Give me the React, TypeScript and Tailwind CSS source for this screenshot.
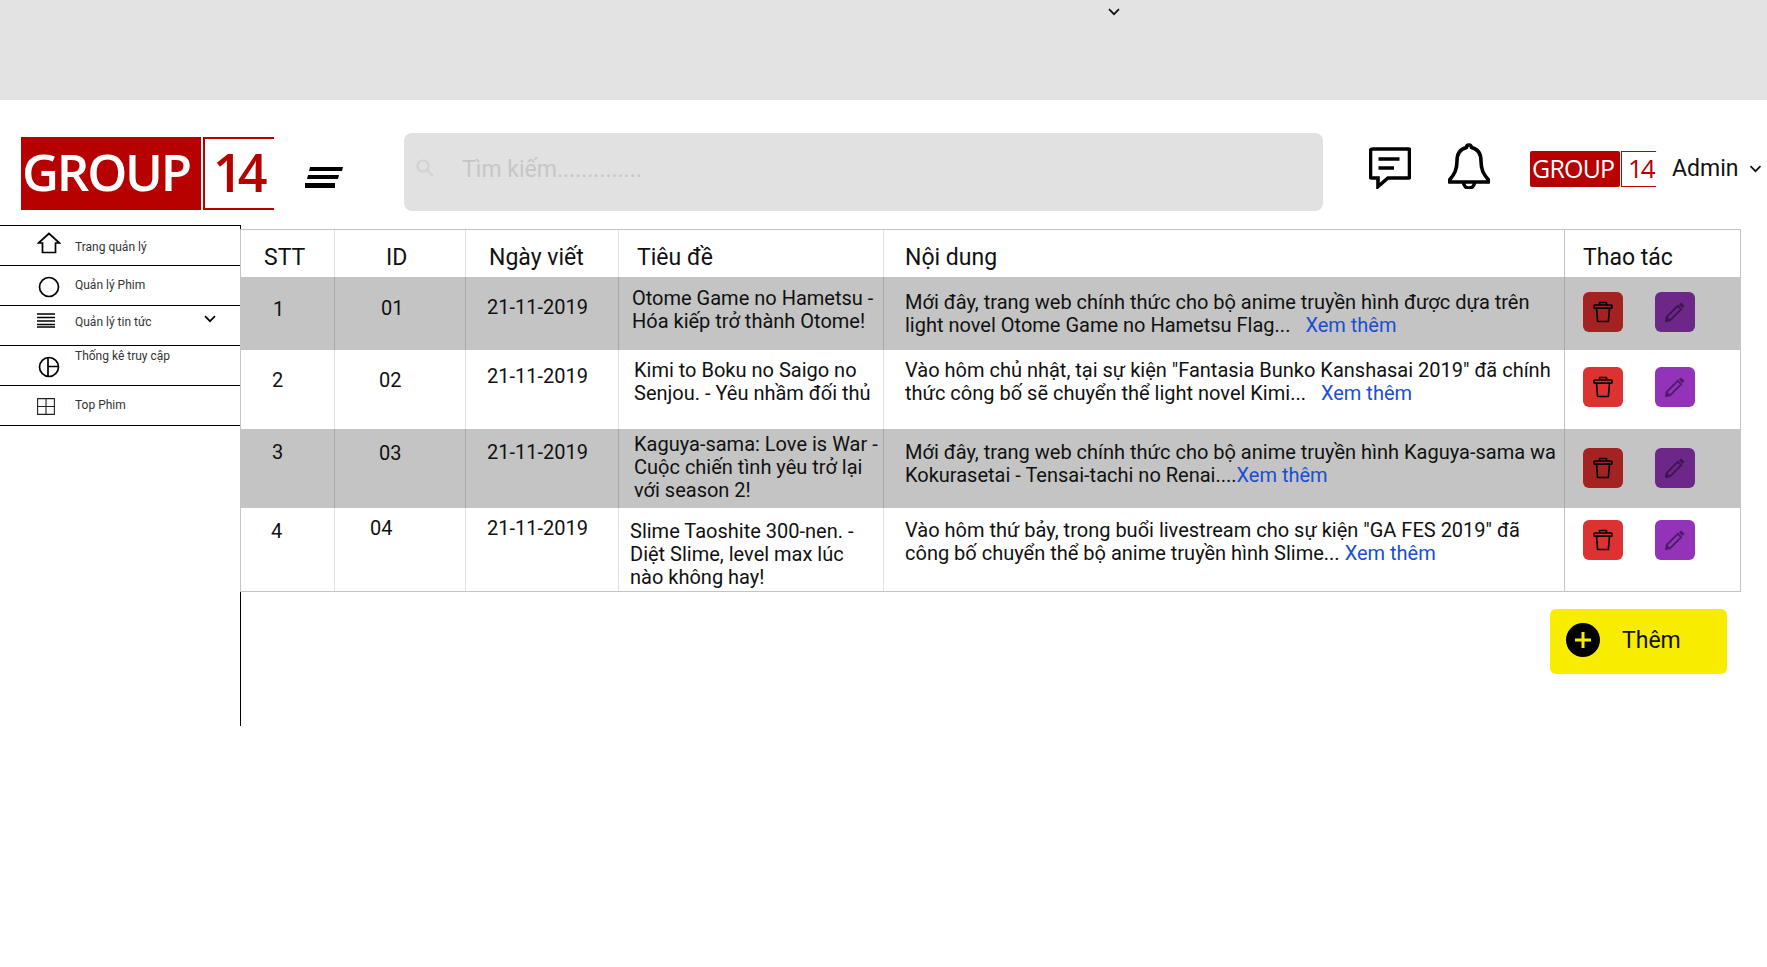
import React from 'react';

const LINK = 'text-[#1a4fd0]';

const rows = [
  {
    dark: true,
    h: 'h-[73px]',
    stt: 'pt-[21px] pl-[32px]', id: 'pt-[20px] pl-[46px]', date: 'pt-[19px] pl-[21px]', title: 'pt-[10px] pl-[13px]', body: 'pt-[14px] pl-[21px]', btn: 'pt-[15px]',
    no: '1', code: '01',
    titleLines: ['Otome Game no Hametsu -', 'Hóa kiếp trở thành Otome!'],
    bodyLines: ['Mới đây, trang web chính thức cho bộ anime truyền hình được dựa trên', 'light novel Otome Game no Hametsu Flag...'],
    gap: 'ml-[15px]',
  },
  {
    dark: false,
    h: 'h-[79px]',
    stt: 'pt-[19px] pl-[31px]', id: 'pt-[19px] pl-[44px]', date: 'pt-[15px] pl-[21px]', title: 'pt-[9px] pl-[15px]', body: 'pt-[9px] pl-[21px]', btn: 'pt-[17px]',
    no: '2', code: '02',
    titleLines: ['Kimi to Boku no Saigo no', 'Senjou. - Yêu nhầm đối thủ'],
    bodyLines: ['Vào hôm chủ nhật, tại sự kiện "Fantasia Bunko Kanshasai 2019" đã chính', 'thức công bố sẽ chuyển thể light novel Kimi...'],
    gap: 'ml-[15px]',
  },
  {
    dark: true,
    h: 'h-[79px]',
    stt: 'pt-[12px] pl-[31px]', id: 'pt-[13px] pl-[44px]', date: 'pt-[12px] pl-[21px]', title: 'pt-[4px] pl-[15px]', body: 'pt-[12px] pl-[21px]', btn: 'pt-[19px]',
    no: '3', code: '03',
    titleLines: ['Kaguya-sama: Love is War -', 'Cuộc chiến tình yêu trở lại', 'với season 2!'],
    bodyLines: ['Mới đây, trang web chính thức cho bộ anime truyền hình Kaguya-sama wa', 'Kokurasetai - Tensai-tachi no Renai....'],
    gap: '',
  },
  {
    dark: false,
    h: 'h-[83px]',
    stt: 'pt-[12px] pl-[30px]', id: 'pt-[9px] pl-[35px]', date: 'pt-[9px] pl-[21px]', title: 'pt-[12px] pl-[11px]', body: 'pt-[11px] pl-[21px]', btn: 'pt-[12px]',
    no: '4', code: '04',
    titleLines: ['Slime Taoshite 300-nen. -', 'Diệt Slime, level max lúc', 'nào không hay!'],
    bodyLines: ['Vào hôm thứ bảy, trong buổi livestream cho sự kiện "GA FES 2019" đã', 'công bố chuyển thể bộ anime truyền hình Slime...'],
    gap: 'ml-[5px]',
  },
];

function Chevron({ className }: { className: string }) {
  return (
    <svg className={className} viewBox="0 0 12 8" fill="none" stroke="currentColor" strokeWidth={1.7}>
      <path d="M1 1.2 6 6.2 11 1.2" />
    </svg>
  );
}

function TrashIcon() {
  return (
    <svg className="w-[20px] h-[22px]" viewBox="0 0 20 22" fill="none" stroke="#000" strokeWidth={1.7} strokeLinejoin="round">
      <path d="M6.5 4V1.5h7V4" />
      <rect x="1" y="4" width="18" height="3.2" rx="1" />
      <path d="M3.5 7.2 4.6 20.5h10.8L16.500 7.2" />
    </svg>
  );
}

function PencilIcon({ dark }: { dark: boolean }) {
  const c = dark ? '#3f1455' : '#4f1a6c';
  return (
    <svg className="w-[20px] h-[20px]" viewBox="0 0 20 20" fill="none" stroke={c} strokeWidth={1.8}>
      <path d="M1 19 1.600 15 12.800 3.800 16.200 7.200 5 18.400Z" />
      <path d="M1.500 15.500 4.500 18.500" />
      <path d="M15 1.500 18.500 5" strokeWidth={3} />
    </svg>
  );
}

function ActionButtons({ dark }: { dark: boolean }) {
  return (
    <div className="flex gap-[32px] pl-[18px]">
      <div className={`w-[40px] h-[40px] rounded-[6px] flex items-center justify-center ${dark ? 'bg-[#a52222]' : 'bg-[#dc3232]'}`}>
        <TrashIcon />
      </div>
      <div className={`w-[40px] h-[40px] rounded-[6px] flex items-center justify-center ${dark ? 'bg-[#6d2789]' : 'bg-[#9233b8]'}`}>
        <PencilIcon dark={dark} />
      </div>
    </div>
  );
}

function Logo() {
  return (
    <div className="flex w-[253px] h-[73px] font-['Open_Sans',sans-serif] shrink-0">
      <div className="w-[180px] h-full bg-[#b70000] text-white text-[51px] font-semibold tracking-[-2.2px] leading-[68px] pl-[1px]">GROUP</div>
      <div className="ml-[2px] w-[71px] h-full border-y-2 border-l-2 border-[#b70000] text-[#b70000] text-[52px] font-semibold leading-[66px] pl-[8px] tracking-[-5px]">14</div>
    </div>
  );
}

function SmallLogo() {
  return (
    <div className="flex w-[126px] h-[36px] font-['Open_Sans',sans-serif] shrink-0">
      <div className="w-[90px] h-full rounded-[2px] bg-[#b70000] text-white text-[25px] font-medium tracking-[-0.8px] leading-[34px] pl-[2px]">GROUP</div>
      <div className="ml-px w-[35px] h-full border-y border-l border-[#b70000] text-[#b70000] text-[26px] font-medium leading-[32px] pl-[6px] tracking-[-2px]">14</div>
    </div>
  );
}

const menu = [
  {
    label: 'Trang quản lý',
    text: 'pt-[13px]',
    icon: (
      <svg className="w-[24px] h-[22px] ml-[37px] mt-[6px]" viewBox="0 0 24 22" fill="none" stroke="#000" strokeWidth={1.7}>
        <path d="M1.500 11 12 1.500 22.500 11H18.500V20.500H5.500V11Z" />
      </svg>
    ),
  },
  {
    label: 'Quản lý Phim',
    text: 'pt-[11px]',
    icon: (
      <svg className="w-[22px] h-[22px] ml-[38px] mt-[10px]" viewBox="0 0 22 22" fill="none" stroke="#000" strokeWidth={1.7}>
        <circle cx="11" cy="11" r="9.500" />
      </svg>
    ),
  },
  {
    label: 'Quản lý tin tức',
    text: 'pt-[8px]',
    icon: (
      <svg className="w-[19px] h-[15px] ml-[37px] mt-[7px]" viewBox="0 0 19 15" fill="none" stroke="#000" strokeWidth={1.3}>
        <path d="M0 1H18M0 4.500H18M0 8H18M0 11.500H18M0 14H18" />
      </svg>
    ),
    chevron: true,
  },
  {
    label: 'Thống kê truy cập',
    text: 'pt-[2px]',
    icon: (
      <svg className="w-[22px] h-[22px] ml-[38px] mt-[10px]" viewBox="0 0 22 22" fill="none" stroke="#000" strokeWidth={1.7}>
        <circle cx="11" cy="11" r="9.500" />
        <path d="M10 1.500V20.500M10 10.500H20.500" />
      </svg>
    ),
  },
  {
    label: 'Top Phim',
    text: 'pt-[11px]',
    icon: (
      <svg className="w-[18px] h-[17px] ml-[37px] mt-[12px] mr-[2px]" viewBox="0 0 18 17" fill="none" stroke="#222" strokeWidth={1.100}>
        <path d="M.6.6H17.400V16.400H.6ZM9 .6V16.400M.6 8.500H17.400" />
      </svg>
    ),
  },
];

function Sidebar() {
  return (
    <aside className="w-[241px] h-[501px] shrink-0 border-r border-black">
      <div className="border-t border-black">
        {menu.map(item => (
          <div key={item.label} className="relative flex h-[40px] border-b border-black">
            <div className="w-[75px] shrink-0">{item.icon}</div>
            <div className={`text-[12px] leading-[16px] text-[#333] ${item.text}`}>{item.label}</div>
            {item.chevron && <Chevron className="absolute left-[204px] top-[9px] w-[12px] h-[8px] text-black" />}
          </div>
        ))}
      </div>
    </aside>
  );
}

function DataTable() {
  const header = [
    { label: 'STT', cls: 'w-[94px] pl-[23px] border-[#e0e0e0]' },
    { label: 'ID', cls: 'w-[131px] pl-[51px] border-[#e0e0e0]' },
    { label: 'Ngày viết', cls: 'w-[153px] pl-[23px] border-[#e0e0e0]' },
    { label: 'Tiêu đề', cls: 'w-[265px] pl-[18px] border-[#e0e0e0]' },
    { label: 'Nội dung', cls: 'w-[681px] pl-[21px] border-[#c4c4c4]' },
  ];
  return (
    <div className="w-[1501px] mt-[4px] -ml-px bg-white border border-[#c4c4c4] text-[20px] leading-[23px] text-[#111]">
      <div className="flex h-[47px] text-[23px]">
        {header.map(h => (
          <div key={h.label} className={`${h.cls} border-r pt-[14px] leading-[27px]`}>{h.label}</div>
        ))}
        <div className="flex-1 pl-[18px] pt-[14px] leading-[27px]">Thao tác</div>
      </div>
      {rows.map(r => {
        const line = r.dark ? 'border-[#a9a9a9]' : 'border-[#e0e0e0]';
        return (
          <div key={r.no} className={`flex ${r.h} ${r.dark ? 'bg-[#c4c4c4]' : 'bg-white'}`}>
            <div className={`w-[94px] border-r ${line} ${r.stt}`}>{r.no}</div>
            <div className={`w-[131px] border-r ${line} ${r.id}`}>{r.code}</div>
            <div className={`w-[153px] border-r ${line} ${r.date}`}>21-11-2019</div>
            <div className={`w-[265px] border-r ${line} ${r.title} whitespace-nowrap`}>
              {r.titleLines.map(t => <div key={t}>{t}</div>)}
            </div>
            <div className={`w-[681px] border-r ${r.dark ? 'border-[#a9a9a9]' : 'border-[#c4c4c4]'} ${r.body} whitespace-nowrap`}>
              <div>{r.bodyLines[0]}</div>
              <div>{r.bodyLines[1]}<span className={`${LINK} ${r.gap}`}>Xem thêm</span></div>
            </div>
            <div className={`flex-1 ${r.btn}`}>
              <ActionButtons dark={r.dark} />
            </div>
          </div>
        );
      })}
    </div>
  );
}

export default function App() {
  return (
    <div className="min-h-[967px] bg-white font-['Roboto',sans-serif] text-[#111]">
      <div className="h-[100px] bg-[#e3e3e3] flex justify-center pl-[460px] pt-[8px]">
        <Chevron className="w-[12px] h-[8px] text-[#111]" />
      </div>

      <header className="flex h-[125px] items-start">
        <div className="ml-[21px] mt-[37px]"><Logo /></div>
        <svg className="ml-[31px] mt-[67px] w-[38px] h-[21px] shrink-0" viewBox="0 0 38 21" fill="#000">
          <path d="M5 0H38L37 4H4ZM3 8H34L33 12H2ZM0 16H30V21H0Z" />
        </svg>
        <div className="ml-[61px] mt-[33px] w-[919px] h-[78px] rounded-[8px] bg-[#e1e1e1] flex items-center shrink-0">
          <svg className="ml-[12px] w-[18px] h-[18px] -mt-[8px]" viewBox="0 0 18 18" fill="none" stroke="#d2d2d2" strokeWidth={2.2}>
            <circle cx="7" cy="7" r="5.500" />
            <path d="M11 11 17 17" />
          </svg>
          <span className="ml-[28px] -mt-[4px] text-[23px] text-[#c6c6c6]">Tìm kiếm..............</span>
        </div>
        <svg className="ml-[46px] mt-[47px] w-[42px] h-[42px] shrink-0" viewBox="0 0 42 42" fill="none" stroke="#000" strokeWidth={3.6}>
          <path d="M4 2H39.500C40 2 40.500 2.500 40.500 3V30C40.500 30.500 40 31 39.500 31H19L9 39.500V31H3C2 31 1.500 30.500 1.500 30V4C1.500 3 2.500 2 4 2Z" />
          <path d="M9.500 12H30.500M9.500 21H25" strokeWidth={3.500} />
        </svg>
        <svg className="ml-[37px] mt-[43px] w-[42px] h-[46px] shrink-0" viewBox="0 0 42 46" fill="none" stroke="#000" strokeWidth={3.6}>
          <path d="M21 2C19.500 2 18.500 3 18.500 4.500C12 6 9 11.500 9 18C9 27 6.500 31 1.500 37V39H40.500V37C35.500 31 33 27 33 18C33 11.500 30 6 23.500 4.500C23.500 3 22.500 2 21 2Z" strokeLinejoin="round" />
          <path d="M15.500 39C15.500 47 26.500 47 26.500 39" />
        </svg>
        <div className="ml-[40px] mt-[51px]"><SmallLogo /></div>
        <span className="ml-[16px] mt-[55px] text-[23px] leading-[28px] text-[#111]">Admin</span>
        <Chevron className="ml-[11px] mt-[65px] w-[13px] h-[8px] text-[#111] shrink-0" />
      </header>

      <main className="flex items-start">
        <Sidebar />
        <div>
          <DataTable />
          <div className="flex justify-end mt-[17px] mr-[14px]">
            <div className="w-[177px] h-[65px] rounded-[6px] bg-[#f8ed00] flex items-center">
              <div className="ml-[16px] -mt-[4px] w-[34px] h-[34px] rounded-full bg-black flex items-center justify-center">
                <svg className="w-[18px] h-[18px]" viewBox="0 0 18 18" stroke="#f8ed00" strokeWidth={3}>
                  <path d="M9 1V17M1 9H17" />
                </svg>
              </div>
              <span className="ml-[22px] text-[23px] text-[#111]">Thêm</span>
            </div>
          </div>
        </div>
      </main>
    </div>
  );
}
